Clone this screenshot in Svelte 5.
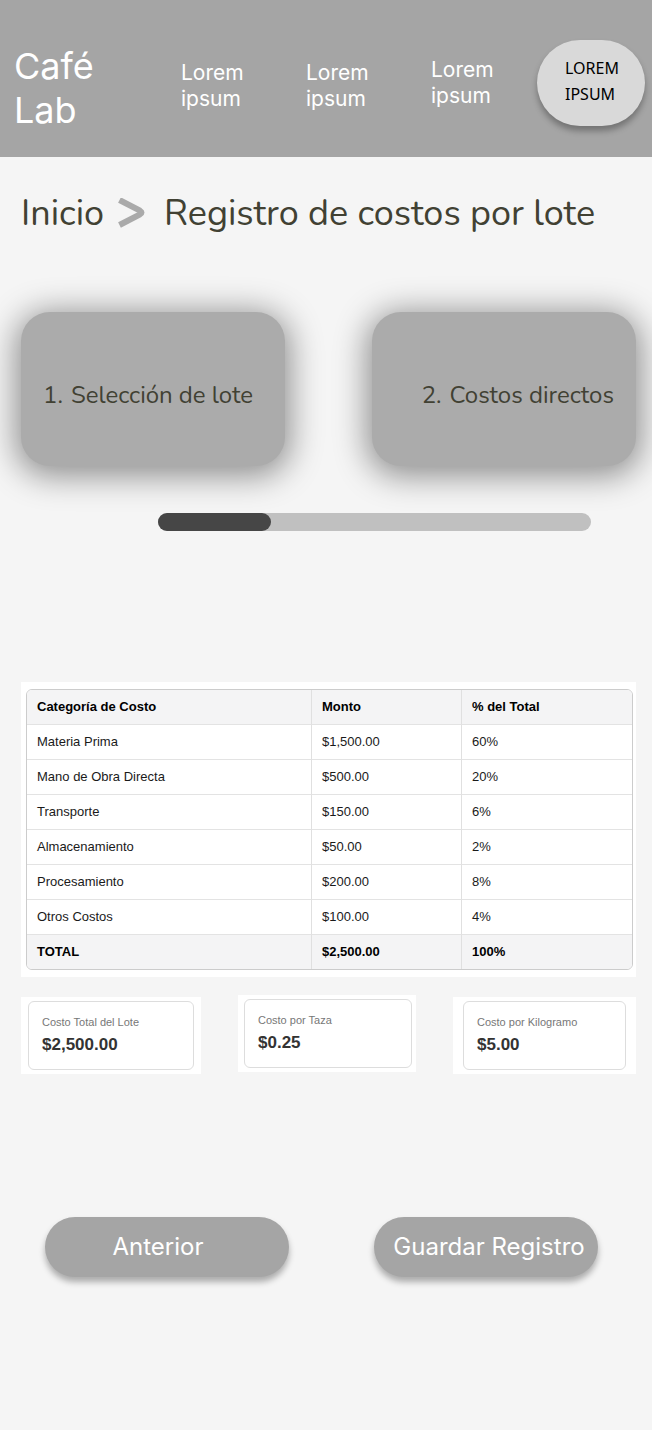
<script>
  const rows = [
    ['Materia Prima', '$1,500.00', '60%'],
    ['Mano de Obra Directa', '$500.00', '20%'],
    ['Transporte', '$150.00', '6%'],
    ['Almacenamiento', '$50.00', '2%'],
    ['Procesamiento', '$200.00', '8%'],
    ['Otros Costos', '$100.00', '4%'],
  ];
  const progress = 26;
</script>

<header>
  <a class="brand" href="#inicio">Café Lab</a>
  <nav class="links">
    <a href="#uno">Lorem ipsum</a>
    <a href="#dos">Lorem ipsum</a>
  </nav>
  <div class="account">
    <a href="#tres">Lorem ipsum</a>
    <button type="button">LOREM IPSUM</button>
  </div>
</header>

<main>
  <h1>
    <a href="#inicio">Inicio</a>
    <svg viewBox="0 0 28 32" width="28" height="32" aria-hidden="true">
      <path d="M1.500 2L22 12.700Q25 14.500 22 16.300L1.500 27" fill="none" stroke="#aaa" stroke-width="6" />
    </svg>
    <span>Registro de costos por lote</span>
  </h1>

  <section class="steps">
    <button type="button"><span>1.</span><span>Selección de lote</span></button>
    <button type="button" class="next"><span>2.</span><span>Costos directos</span></button>
  </section>

  <div class="track" role="progressbar" aria-label="Avance" aria-valuemin="0" aria-valuemax="100" aria-valuenow={progress}>
    <div class="fill" style="width: {progress}%"></div>
  </div>

  <section class="sheet">
    <div class="frame">
      <table>
        <colgroup><col /><col class="amount" /><col class="share" /></colgroup>
        <thead>
          <tr><th>Categoría de Costo</th><th>Monto</th><th>% del Total</th></tr>
        </thead>
        <tbody>
          {#each rows as row}
            <tr>{#each row as cell}<td>{cell}</td>{/each}</tr>
          {/each}
        </tbody>
        <tfoot>
          <tr><th>TOTAL</th><th>$2,500.00</th><th>100%</th></tr>
        </tfoot>
      </table>
    </div>
  </section>

  <section class="stats">
    <div class="stat total"><div><span>Costo Total del Lote</span><strong>$2,500.00</strong></div></div>
    <div class="stat cup"><div><span>Costo por Taza</span><strong>$0.25</strong></div></div>
    <div class="stat kilo"><div><span>Costo por Kilogramo</span><strong>$5.00</strong></div></div>
  </section>

  <section class="actions">
    <button type="button" class="back">Anterior</button>
    <button type="button" class="save">Guardar Registro</button>
  </section>
</main>

<style>
  :global(body) {
    margin: 0;
    background: #f5f5f5;
  }
  a {
    color: inherit;
    text-decoration: none;
  }
  button {
    border: 0;
    cursor: pointer;
  }
  header {
    display: grid;
    grid-template-columns: 167fr 250fr 214fr;
    align-items: start;
    padding: 40px 7px 25px 14px;
    background: #a5a5a5;
    color: #fff;
    font-family: Inter, sans-serif;
  }
  .brand {
    width: 100px;
    padding-top: 4px;
    font-size: 36px;
    line-height: 44px;
    font-weight: 400;
  }
  .links {
    display: grid;
    grid-template-columns: 1fr 1fr;
    padding-top: 20px;
  }
  .links a,
  .account a {
    width: 70px;
    font-size: 21px;
    line-height: 26px;
    font-weight: 400;
  }
  .account {
    display: flex;
    align-items: center;
    justify-content: space-between;
  }
  .account button {
    width: 108px;
    height: 86px;
    padding: 0 20px 4px 28px;
    border-radius: 43px;
    background: #d9d9d9;
    box-shadow: 0 5px 6px rgba(0, 0, 0, 0.3);
    color: #000;
    font: 16px/26px "Noto Sans", sans-serif;
    text-align: left;
  }
  main {
    padding: 35px 16px 153px 21px;
  }
  h1 {
    display: flex;
    align-items: center;
    margin: 0;
    color: #414133;
    font: 400 36px/44px Nunito, "Open Sans", sans-serif;
  }
  h1 svg {
    margin: 0 18px 0 14px;
  }
  .steps {
    display: grid;
    grid-template-columns: 1fr 1fr;
    gap: 87px;
    margin-top: 76px;
  }
  .steps button {
    display: flex;
    align-items: center;
    gap: 8px;
    height: 154px;
    padding: 12px 22px 0;
    border-radius: 29px;
    background: #ababab;
    box-shadow: 0 5px 32px 5px rgba(0, 0, 0, 0.42);
    color: #414133;
    font: 400 24px/32px Nunito, "Open Sans", sans-serif;
    white-space: nowrap;
  }
  .steps .next {
    justify-content: flex-end;
  }
  .track {
    height: 18px;
    margin: 47px 45px 0 137px;
    border-radius: 9px;
    background: #c0c0c0;
  }
  .fill {
    height: 18px;
    border-radius: 9px;
    background: #464646;
  }
  .sheet {
    margin-top: 151px;
    padding: 7px 3px 7px 5px;
    background: #fff;
  }
  .frame {
    overflow: hidden;
    border: 1px solid #ccc;
    border-radius: 6px;
  }
  table {
    width: 100%;
    table-layout: fixed;
    border-collapse: separate;
    border-spacing: 0;
    color: #1a1a1a;
    font: 13px/18px "Liberation Sans", Arial, sans-serif;
  }
  .amount {
    width: 150px;
  }
  .share {
    width: 170px;
  }
  th,
  td {
    height: 34px;
    padding: 0 10px;
    border-bottom: 1px solid #e3e3e3;
    text-align: left;
  }
  th:not(:last-child),
  td:not(:last-child) {
    border-right: 1px solid #e0e0e0;
  }
  th {
    background: #f4f4f5;
    color: #000;
  }
  tfoot th {
    border-bottom: 0;
  }
  .stats {
    display: grid;
    grid-template-columns: 180fr 178fr 183fr;
    gap: 37px;
    align-items: start;
    margin-top: 18px;
    font-family: "Liberation Sans", Arial, sans-serif;
  }
  .stat {
    padding: 4px;
    background: #fff;
  }
  .stat div {
    display: flex;
    flex-direction: column;
    gap: 5px;
    padding: 12px 13px 14px;
    border: 1px solid #ddd;
    border-radius: 6px;
  }
  .total,
  .kilo {
    margin-top: 2px;
  }
  .total {
    padding: 4px 7px;
  }
  .cup {
    padding: 4px 4px 4px 6px;
  }
  .kilo {
    padding: 4px 10px;
  }
  .stat span {
    color: #777;
    font-size: 11px;
    line-height: 16px;
  }
  .stat strong {
    color: #333;
    font-size: 17px;
    line-height: 20px;
  }
  .actions {
    display: grid;
    grid-template-columns: 244fr 224fr;
    gap: 85px;
    margin: 143px 38px 0 24px;
  }
  .actions button {
    height: 60px;
    border-radius: 30px;
    background: #a5a5a5;
    box-shadow: 0 5px 6px rgba(0, 0, 0, 0.3);
    color: #fff;
    font: 400 24px/30px Inter, sans-serif;
    white-space: nowrap;
  }
  .actions .back {
    padding: 0 18px 0 0;
  }
  .actions .save {
    padding: 0 0 0 6px;
  }
</style>
